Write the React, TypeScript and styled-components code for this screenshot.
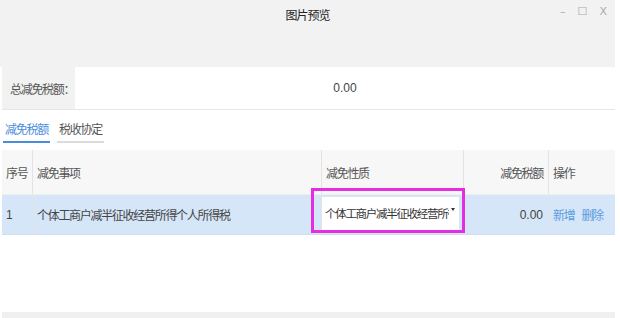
import React from "react";
import styled, { createGlobalStyle } from "styled-components";

const GlobalStyle = createGlobalStyle`
  html, body {
    margin: 0;
    padding: 0;
    background: #ffffff;
  }
  body {
    font-family: "Noto Sans CJK SC", "Microsoft YaHei", sans-serif;
    font-size: 12px;
    color: #555;
  }
`;

const Window = styled.div`
  width: 620px;
  height: 318px;
  display: flex;
  flex-direction: column;
  overflow: hidden;
`;

const TitleBar = styled.div`
  height: 67px;
  background: #f2f2f2;
  position: relative;
  display: flex;
  justify-content: center;
  padding-top: 6px;
  box-sizing: border-box;
  margin-right: 5px;
`;

const Title = styled.span`
  font-size: 12px;
  letter-spacing: -1px;
  color: #222;
  line-height: 18px;
`;

const Controls = styled.div`
  position: absolute;
  right: 8px;
  top: 5px;
  display: flex;
  gap: 12px;
  align-items: center;
  color: #aaa;
  font-family: "DejaVu Sans", sans-serif;
  font-size: 11px;
`;

const Body = styled.div`
  flex: 1;
  display: flex;
  flex-direction: column;
  padding: 0 5px 0 2px;
`;

const TotalRow = styled.div`
  display: flex;
  height: 42px;
  border-bottom: 1px solid #e6e6e6;
`;

const TotalLabel = styled.div`
  width: 73px;
  background: #f2f2f2;
  display: flex;
  align-items: center;
  padding-left: 8px;
  box-sizing: border-box;
  letter-spacing: -1.3px;
  color: #555;
`;

const TotalValue = styled.div`
  flex: 1;
  display: flex;
  align-items: center;
  justify-content: center;
  font-family: "Liberation Sans", sans-serif;
  font-size: 12px;
  color: #444;
`;

const Tabs = styled.div`
  display: flex;
  gap: 7px;
  margin-top: 8px;
  padding-left: 1px;
`;

const Tab = styled.div<{ $active?: boolean }>`
  width: 47px;
  height: 25px;
  display: flex;
  align-items: flex-start;
  justify-content: center;
  padding-top: 2px;
  box-sizing: border-box;
  letter-spacing: -1.3px;
  color: ${(p) => (p.$active ? "#4a8ddc" : "#555")};
  border-bottom: 2px solid ${(p) => (p.$active ? "#4a8ddc" : "#dcdcdc")};
`;

const Table = styled.div`
  margin-top: 7px;
  display: flex;
  flex-direction: column;
`;

const Row = styled.div<{ $head?: boolean }>`
  display: grid;
  grid-template-columns: 31px 289px 142px 85px 1fr;
  height: ${(p) => (p.$head ? "45px" : "40px")};
  background: ${(p) => (p.$head ? "#f7f7f7" : "#d5e6f8")};
  color: ${(p) => (p.$head ? "#555" : "#444")};
  border-bottom: 1px solid ${(p) => (p.$head ? "#eeeeee" : "#cfdfef")};
  box-sizing: border-box;
`;

const Cell = styled.div<{ $right?: boolean; $divider?: boolean }>`
  display: flex;
  align-items: center;
  justify-content: ${(p) => (p.$right ? "flex-end" : "flex-start")};
  padding: 0 ${(p) => (p.$right ? "5px" : "4px")};
  letter-spacing: -1.3px;
  border-right: ${(p) => (p.$divider ? "1px solid #e3e3e3" : "none")};
  position: relative;
  min-width: 0;
  white-space: nowrap;
`;

const Num = styled.span`
  font-family: "Liberation Sans", sans-serif;
  letter-spacing: 0;
`;

const Link = styled.span`
  color: #5b9be0;
  margin-right: 7px;
`;

const Select = styled.div`
  width: 139px;
  height: 35px;
  background: #ffffff;
  display: flex;
  align-items: center;
  padding: 0 4px 4px 3px;
  box-sizing: border-box;
  margin-left: -4px;
  color: #333;
  overflow: hidden;
`;

const SelectText = styled.span`
  display: block;
  overflow: hidden;
  white-space: nowrap;
  width: 124px;
  font-size: 11.5px;
  letter-spacing: -1.3px;
`;

const Caret = styled.span`
  flex: none;
  margin-left: auto;
  width: 0;
  height: 0;
  border-left: 2px solid transparent;
  border-right: 2px solid transparent;
  border-top: 3px solid #333;
  margin-top: -6px;
`;

const Highlight = styled.div`
  position: absolute;
  left: -11px;
  top: -7px;
  width: 154px;
  height: 45px;
  border: 3px solid #e52ee0;
  box-sizing: border-box;
  pointer-events: none;
`;

const Spacer = styled.div`
  flex: 1;
`;

const BottomBar = styled.div`
  height: 6px;
  background: #f0f0f0;
`;

const App: React.FC = () => {
  return (
    <>
      <GlobalStyle />
      <Window>
        <TitleBar>
          <Title>图片预览</Title>
          <Controls>
            <span>–</span>
            <span>☐</span>
            <span>X</span>
          </Controls>
        </TitleBar>
        <Body>
          <TotalRow>
            <TotalLabel>总减免税额：</TotalLabel>
            <TotalValue>0.00</TotalValue>
          </TotalRow>
          <Tabs>
            <Tab $active>减免税额</Tab>
            <Tab>税收协定</Tab>
          </Tabs>
          <Table>
            <Row $head>
              <Cell $divider>序号</Cell>
              <Cell $divider>减免事项</Cell>
              <Cell $divider>减免性质</Cell>
              <Cell $divider $right>减免税额</Cell>
              <Cell>操作</Cell>
            </Row>
            <Row>
              <Cell $divider><Num>1</Num></Cell>
              <Cell $divider>个体工商户减半征收经营所得个人所得税</Cell>
              <Cell $divider>
                <Select>
                  <SelectText>个体工商户减半征收经营所得个人所得税</SelectText>
                  <Caret />
                </Select>
                <Highlight />
              </Cell>
              <Cell $divider $right><Num>0.00</Num></Cell>
              <Cell>
                <Link>新增</Link>
                <Link>删除</Link>
              </Cell>
            </Row>
          </Table>
          <Spacer />
          <BottomBar />
        </Body>
      </Window>
    </>
  );
};

export default App;
